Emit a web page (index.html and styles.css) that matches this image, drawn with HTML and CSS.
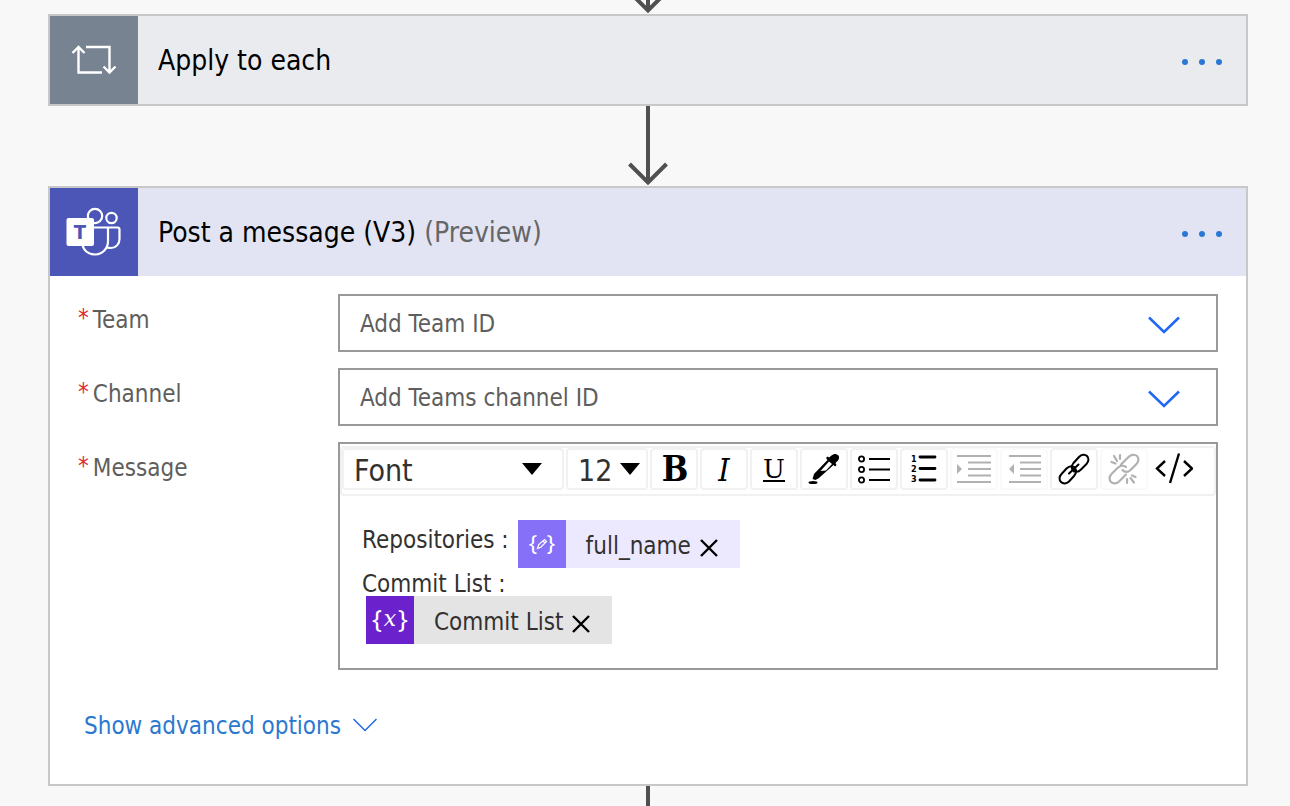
FILE: index.html
```
<!DOCTYPE html>
<html lang="en">
<head>
<meta charset="utf-8">
<meta name="viewport" content="width=device-width, initial-scale=1">
<title>Flow editor</title>
<link rel="stylesheet" href="styles.css">
</head>
<body>
<main class="flow">
  <div class="connector connector-in">
    <svg class="arrow" width="40" height="80" viewBox="0 0 40 80" aria-hidden="true"><path d="M20 0V77M1.500 58L20 76.500L38.500 58"/></svg>
  </div>

  <section class="card">
    <header class="card-header header-loop">
      <div class="card-icon icon-loop">
        <svg width="48" height="40" viewBox="0 0 48 40" aria-hidden="true"><path d="M8.500 7V32.500H32M2.500 13L8.500 7L14.500 13M16 7H39.500V32M33.500 26.500L39.500 32.500L45.500 26.500" fill="none" stroke="#fff" stroke-width="2.400"/></svg>
      </div>
      <h2 class="card-title">Apply to each</h2>
      <button class="more" type="button" aria-label="Apply to each menu"><span class="dot"></span><span class="dot"></span><span class="dot"></span></button>
    </header>
  </section>

  <div class="connector">
    <svg class="arrow" width="40" height="80" viewBox="0 0 40 80" aria-hidden="true"><path d="M20 0V77M1.500 58L20 76.500L38.500 58"/></svg>
  </div>

  <section class="card">
    <header class="card-header header-teams">
      <div class="card-icon icon-teams">
        <svg width="56" height="56" viewBox="0 0 56 56" aria-hidden="true">
          <g fill="none" stroke="#fff" stroke-width="2.200">
            <circle cx="29" cy="12" r="7.200"/>
            <circle cx="45.500" cy="14" r="5.200"/>
            <path d="M27 23.500H42V37C42 45 36 50.500 29 50.500C22.500 50.500 17.500 46.500 16.300 40M42 23.500H51.500Q53.500 23.500 53.500 25.500V35C53.500 40 50 44 45 44Q43 44 41 43.500"/>
          </g>
          <rect x="0.500" y="14" width="27.500" height="28" rx="2" fill="#fff"/>
          <text class="teams-letter" x="14" y="35" text-anchor="middle">T</text>
        </svg>
      </div>
      <h2 class="card-title">Post a message (V3) <span class="preview">(Preview)</span></h2>
      <button class="more" type="button" aria-label="Post a message menu"><span class="dot"></span><span class="dot"></span><span class="dot"></span></button>
    </header>

    <form class="card-body">
      <div class="field">
        <label class="label" for="team"><span class="required">*</span>Team</label>
        <div class="picker">
          <select class="picker-select" id="team"><option>Add Team ID</option></select>
          <svg class="picker-chevron" width="32" height="18" viewBox="0 0 32 18" aria-hidden="true"><path d="M1 1.500L16 16L31 1.500"/></svg>
        </div>
      </div>
      <div class="field">
        <label class="label" for="channel"><span class="required">*</span>Channel</label>
        <div class="picker">
          <select class="picker-select" id="channel"><option>Add Teams channel ID</option></select>
          <svg class="picker-chevron" width="32" height="18" viewBox="0 0 32 18" aria-hidden="true"><path d="M1 1.500L16 16L31 1.500"/></svg>
        </div>
      </div>
      <div class="field">
        <span class="label" id="message-label"><span class="required">*</span>Message</span>
        <div class="editor">
          <div class="toolbar" role="toolbar" aria-label="Formatting">
            <div class="tool-picker tool-font">
              <select class="tool-select" aria-label="Font"><option>Font</option></select>
              <svg class="tool-caret" width="20" height="12" viewBox="0 0 20 12" aria-hidden="true"><path d="M0 0H20L10 12Z"/></svg>
            </div>
            <div class="tool-picker tool-size">
              <select class="tool-select" aria-label="Font size"><option>12</option></select>
              <svg class="tool-caret" width="20" height="12" viewBox="0 0 20 12" aria-hidden="true"><path d="M0 0H20L10 12Z"/></svg>
            </div>
            <button class="tool tool-bold" type="button" aria-label="Bold">B</button>
            <button class="tool tool-italic" type="button" aria-label="Italic">I</button>
            <button class="tool tool-underline" type="button" aria-label="Underline"><span class="underlined">U</span></button>
            <button class="tool" type="button" aria-label="Text color">
              <svg width="32" height="32" viewBox="0 0 32 32" aria-hidden="true"><path fill-rule="evenodd" d="M30.500 2.500C28.500 .300 25.500 .500 23.500 2.500L21 4.500L19.500 3.500L18 5L19.500 7L6 21L4.500 26L7.500 27L11 25L25.500 12L27 13.500L28.500 12L27.500 10L30 7.500C31.200 6 31.500 4 30.500 2.500ZM21 8.500L24 11L18 17.500L12.500 18Z"/><ellipse cx="5" cy="29.500" rx="4.500" ry="1.500"/></svg>
            </button>
            <button class="tool" type="button" aria-label="Bulleted list">
              <svg width="32" height="32" viewBox="0 0 32 32" aria-hidden="true"><g fill="none" stroke="#000" stroke-width="1.800"><circle cx="3.500" cy="6" r="2.600"/><circle cx="3.500" cy="16.500" r="2.600"/><circle cx="3.500" cy="27" r="2.600"/><path d="M11 6H32M11 16.500H32M11 27H32"/></g></svg>
            </button>
            <button class="tool" type="button" aria-label="Numbered list">
              <svg width="32" height="32" viewBox="0 0 32 32" aria-hidden="true"><path d="M12 4H27M12 15.500H27M12 27H27" fill="none" stroke="#000" stroke-width="2.800" stroke-linecap="round"/><g class="list-digits"><text x="3" y="9">1</text><text x="3" y="19">2</text><text x="3" y="29">3</text></g></svg>
            </button>
            <button class="tool tool-off" type="button" disabled aria-label="Indent">
              <svg width="34" height="30" viewBox="0 0 34 30" aria-hidden="true"><path d="M0 2H34M11 8.500H34M11 15H34M11 21.500H34M0 28H34" stroke="#000" stroke-width="2"/><path d="M0 10L5 15L0 20Z"/></svg>
            </button>
            <button class="tool tool-off" type="button" disabled aria-label="Outdent">
              <svg width="34" height="30" viewBox="0 0 34 30" aria-hidden="true"><path d="M2 2H34M13 8.500H34M13 15H34M13 21.500H34M2 28H34" stroke="#000" stroke-width="2"/><path d="M7 10L2 15L7 20Z"/></svg>
            </button>
            <button class="tool" type="button" aria-label="Insert link">
              <svg width="32" height="32" viewBox="0 0 32 32" aria-hidden="true"><g fill="none" stroke="#000" stroke-width="2" stroke-linecap="round"><path d="M16 18.500C13 15.500 13.500 12.500 15.500 10L21 4C23.500 1.200 27 1 29 3C31 5 31 8.500 28.500 11L23 16.500C20.500 19 17.500 19 15.500 17.500"/><path d="M16 14C13.500 12.500 10.500 13.500 8.500 15.500L3.500 21C1 23.500 1 27 3 29C5 31 8.500 31 11 28.500L16 23C18.500 20 18.500 16.500 16 14M11 20.500L20.500 11.500"/></g></svg>
            </button>
            <button class="tool tool-off" type="button" disabled aria-label="Remove link">
              <svg width="32" height="32" viewBox="0 0 32 32" aria-hidden="true"><g fill="none" stroke="#000" stroke-width="2.200" stroke-linecap="round"><path d="M13 11.500L20.500 4C23 1.500 27 1 29 3C31 5 31 8.500 28.500 11L22.500 17C20 19.500 16.500 19.500 14.500 17"/><path d="M18 14C15.500 12 12 12.500 9.500 15L3.500 21C1 23.500 1 27 3 29C5 31 8.500 31 11 28.500L18 21.500"/><path d="M6 3L9 8M12 2V6M3.500 9L7.500 10.500M19 26V30M22.500 25L26 29.500M24 22.500L27.500 24"/></g></svg>
            </button>
            <button class="tool tool-code" type="button" aria-label="Code view">
              <svg width="38" height="32" viewBox="0 0 38 32" aria-hidden="true"><path d="M10 8L2 15.500L10 23M29 8L37 15.500L29 23M24 .500L15 30" fill="none" stroke="#000" stroke-width="2.400"/></svg>
            </button>
          </div>
          <div class="message" role="textbox" aria-multiline="true" aria-labelledby="message-label" tabindex="0">
            <div class="line line-token">
              <span class="line-text">Repositories :</span>
              <span class="token token-field">
                <svg class="token-icon" width="48" height="48" viewBox="0 0 48 48" aria-hidden="true"><text class="brace" x="15" y="31" text-anchor="middle">{</text><text class="brace" x="33" y="31" text-anchor="middle">}</text><path d="M19.500 28.500L20.800 24.500L26.500 19.500L28.500 21.500L22.800 27.200ZM25 21L27 23" fill="none" stroke="#fff" stroke-width="1.200"/></svg>
                <span class="token-name">full_name</span>
                <button class="token-remove" type="button" aria-label="Remove full_name"><svg width="18" height="18" viewBox="0 0 18 18" aria-hidden="true"><path d="M1 1L17 17M17 1L1 17"/></svg></button>
              </span>
            </div>
            <div class="line line-plain">Commit List :</div>
            <div class="line line-indent">
              <span class="token token-variable">
                <svg class="token-icon" width="48" height="48" viewBox="0 0 48 48" aria-hidden="true"><text class="brace brace-large" x="11" y="32" text-anchor="middle">{</text><text class="brace-x" x="24" y="30" text-anchor="middle">x</text><text class="brace brace-large" x="37" y="32" text-anchor="middle">}</text></svg>
                <span class="token-name">Commit List</span>
                <button class="token-remove" type="button" aria-label="Remove Commit List"><svg width="18" height="18" viewBox="0 0 18 18" aria-hidden="true"><path d="M1 1L17 17M17 1L1 17"/></svg></button>
              </span>
            </div>
          </div>
        </div>
      </div>
      <a class="advanced" href="#advanced">Show advanced options
        <svg width="24" height="16" viewBox="0 0 24 16" aria-hidden="true"><path d="M0.500 1L12 12.500L23.500 1" fill="none" stroke="#2266e3" stroke-width="1.500"/></svg>
      </a>
    </form>
  </section>

  <div class="connector connector-out"></div>
</main>
</body>
</html>
```
FILE: styles.css
```
* {
  box-sizing: border-box;
}

body {
  margin: 0;
  background: #f8f8f8;
  color: #323130;
  font-family: "DejaVu Sans Condensed", "Noto Sans", sans-serif;
  font-size: 24px;
  line-height: 32px;
}

button,
select {
  margin: 0;
  padding: 0;
  border: 0;
  background: none;
  color: inherit;
  font: inherit;
  appearance: none;
}

svg {
  display: block;
  flex: none;
}

.flow {
  padding: 0 42px 0 48px;
}

.connector {
  display: flex;
  justify-content: center;
  align-items: flex-end;
  height: 80px;
  overflow: hidden;
}

.connector-in {
  height: 14px;
}

.connector-out {
  width: 4px;
  height: 20px;
  margin: 0 auto;
  background: #505050;
}

.arrow path {
  fill: none;
  stroke: #505050;
  stroke-width: 4;
}

.card {
  border: 2px solid #c8c8c8;
  background: #fff;
}

.card-header {
  display: flex;
  align-items: center;
  gap: 20px;
  height: 88px;
  padding-right: 24px;
}

.header-loop {
  background: #eaebef;
}

.header-teams {
  background: #e3e4f3;
}

.card-icon {
  display: flex;
  align-items: center;
  justify-content: center;
  width: 88px;
  height: 88px;
}

.icon-loop {
  background: #778390;
}

.icon-teams {
  background: #4b56b6;
}

.teams-letter {
  fill: #4b56b6;
  font-family: "DejaVu Sans Condensed", sans-serif;
  font-size: 20px;
  font-weight: bold;
}

.card-title {
  flex: 1;
  margin: 0;
  padding-top: 2px;
  color: #000;
  font-size: 28px;
  font-weight: normal;
}

.preview {
  color: #666;
}

.more {
  display: flex;
  justify-content: space-between;
  width: 40px;
  padding: 4px 0 0;
}

.dot {
  width: 6px;
  height: 6px;
  border-radius: 50%;
  background: #2b78d4;
}

.card-body {
  display: flex;
  flex-direction: column;
  gap: 16px;
  padding: 18px 28px 42px;
}

.field {
  display: grid;
  grid-template-columns: 260px minmax(0, 1fr);
  align-items: start;
}

.label {
  display: flex;
  gap: 4px;
  padding-top: 10px;
  color: #605e5c;
}

.required {
  color: #e02b2b;
  line-height: 28px;
}

.picker,
.tool-picker {
  display: grid;
  align-items: center;
}

.picker > *,
.tool-picker > * {
  grid-area: 1 / 1;
}

.picker-select {
  width: 100%;
  height: 58px;
  padding: 2px 60px 0 20px;
  border: 2px solid #999;
  background: #fff;
  color: #605e5c;
}

.picker-chevron {
  justify-self: end;
  margin: 4px 38px 0 0;
  pointer-events: none;
}

.picker-chevron path {
  fill: none;
  stroke: #2266f5;
  stroke-width: 2.5;
}

.editor {
  border: 2px solid #999;
  background: #fff;
}

.toolbar {
  display: flex;
  flex-wrap: wrap;
  gap: 2px;
  margin-top: 2px;
  padding-bottom: 4px;
  border: 2px solid #f1f1f1;
  border-radius: 4px;
}

.tool-picker,
.tool {
  height: 42px;
  border: 2px solid #f1f1f1;
  border-radius: 4px;
}

.tool-font {
  width: 222px;
}

.tool-size {
  width: 82px;
}

.tool-select {
  width: 100%;
  height: 38px;
  padding: 4px 0 0 10px;
  font-size: 30px;
}

.tool-caret {
  justify-self: end;
  margin-right: 20px;
  pointer-events: none;
}

.tool-size .tool-caret {
  margin-right: 6px;
}

.tool {
  display: flex;
  align-items: center;
  justify-content: center;
  width: 48px;
  color: #000;
}

.tool-bold {
  padding-left: 2px;
  font-family: "DejaVu Serif Condensed", "DejaVu Serif", serif;
  font-size: 35px;
  font-weight: bold;
}

.tool-italic {
  padding-top: 2px;
  font-family: "DejaVu Serif Condensed", "DejaVu Serif", serif;
  font-size: 32px;
  font-style: italic;
}

.tool-underline {
  font-family: "DejaVu Serif", serif;
  font-size: 26px;
}

.underlined {
  height: 26px;
  border-bottom: 2px solid #000;
  line-height: 26px;
}

.tool-off {
  border-color: #fafafa;
}

.tool-off svg {
  opacity: 0.3;
}

.tool-code {
  border-color: transparent;
}

.list-digits {
  font-family: "DejaVu Sans Condensed", sans-serif;
  font-size: 9px;
  font-weight: bold;
}

.message {
  padding: 24px 22px;
}

.line {
  display: flex;
}

.line-token {
  gap: 9px;
}

.line-text {
  line-height: 40px;
}

.line-plain {
  height: 28px;
}

.line-indent {
  padding-left: 4px;
}

.token {
  display: flex;
  align-items: center;
  height: 48px;
}

.token-field {
  background: #ece8fd;
}

.token-variable {
  background: #e4e4e4;
}

.token-field .token-icon {
  background: #8670f8;
}

.token-variable .token-icon {
  background: #6b21cc;
}

.brace,
.brace-x {
  fill: #fff;
  font-family: "Noto Sans", sans-serif;
  font-size: 22px;
}

.brace-large {
  font-size: 26px;
}

.brace-x {
  font-family: "DejaVu Serif", serif;
  font-size: 22px;
  font-style: italic;
}

.token-name {
  padding: 4px 9px 0 20px;
}

.token-remove {
  padding: 8px 22px 0 0;
}

.token-remove path {
  fill: none;
  stroke: #000;
  stroke-width: 2.4;
}

.advanced {
  display: flex;
  align-items: center;
  align-self: flex-start;
  gap: 12px;
  padding: 24px 0 0 6px;
  color: #2b78d0;
  text-decoration: none;
}
```
